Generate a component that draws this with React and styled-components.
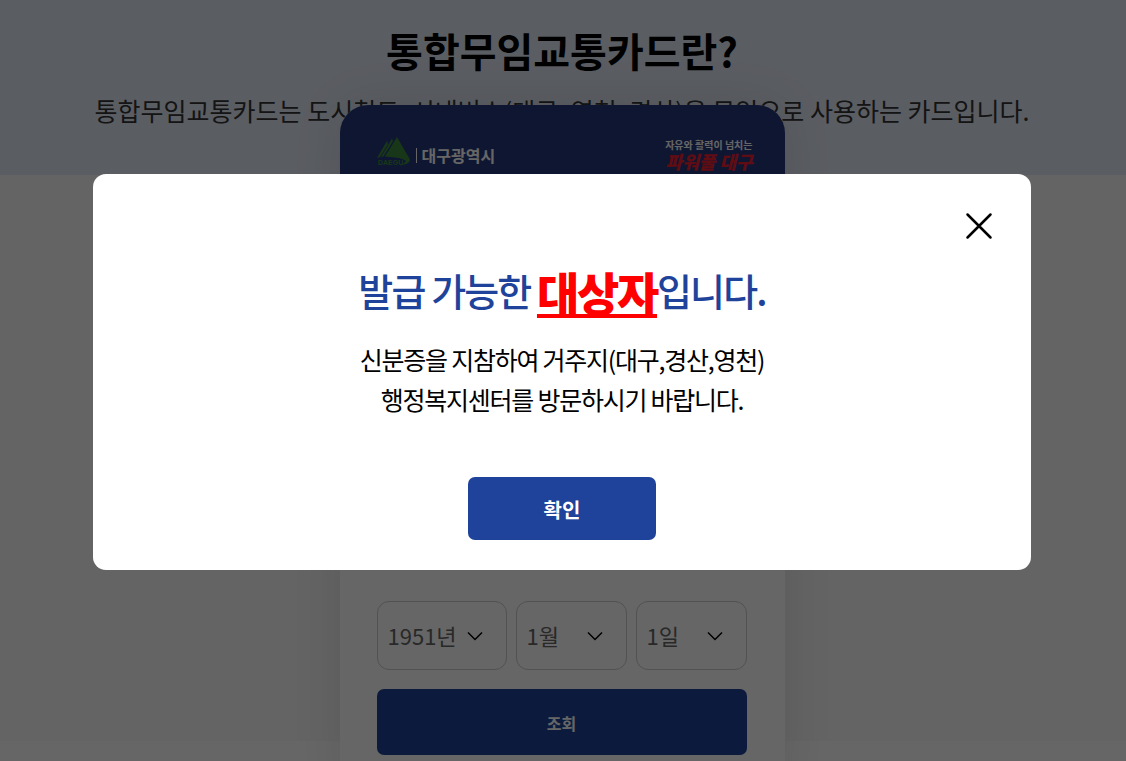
import React, { useId } from "react";
import styled, { createGlobalStyle } from "styled-components";

const GlobalStyle = createGlobalStyle`
  *, *::before, *::after { box-sizing: border-box; }
  body {
    margin: 0;
    background: #fff;
    color: #000;
    font-family: "Noto Sans CJK KR", "Noto Sans", sans-serif;
  }
  h1, h2, p { margin: 0; }
  button, select { font-family: inherit; }
`;

const Page = styled.div`
  height: 100vh;
  overflow: hidden;
`;

const Intro = styled.header`
  height: 175px;
  padding: 20px 2px 0 0;
  text-align: center;
  background: #e1e8f5;
`;

const IntroTitle = styled.h1`
  font-size: 40px;
  line-height: 60px;
  font-weight: 700;
`;

const IntroText = styled.p`
  margin-top: 11px;
  font-size: 25px;
  line-height: 38px;
  color: #333;
  white-space: nowrap;
`;

const Lookup = styled.main`
  height: 566px;
  padding-right: 2px;
  display: flex;
  justify-content: center;
  align-items: flex-start;
  background: #f9f9f9;
`;

const Card = styled.section`
  width: 445px;
  margin-top: -70px;
  flex: none;
  border-radius: 28px;
  overflow: hidden;
  background: #fff;
  box-shadow: 0 0 50px rgba(0, 0, 0, 0.1);
`;

const CardHead = styled.div`
  height: 240px;
  padding: 31px 32px 0 37px;
  display: flex;
  justify-content: space-between;
  align-items: flex-start;
  background: #25397c;
  color: #fff;
`;

const CityBrand = styled.div`
  display: flex;
  align-items: flex-end;
  gap: 6px;
  height: 30px;
`;

const CityName = styled.span`
  display: flex;
  align-items: center;
  gap: 5px;
  font-size: 16px;
  line-height: 22px;
  font-weight: 700;

  &::before {
    content: "";
    width: 1px;
    height: 15px;
    background: currentColor;
  }
`;

const Slogan = styled.div`
  text-align: right;
  white-space: nowrap;
  font-size: 10px;
  line-height: 18px;
  font-weight: 700;
`;

const SloganMark = styled.strong`
  display: block;
  font-size: 18px;
  line-height: 14px;
  font-weight: 900;
  font-style: italic;
  color: #f02030;
`;

const LookupForm = styled.form`
  padding: 256px 38px 40px 37px;
`;

const DateRow = styled.div`
  display: grid;
  grid-template-columns: 130px 111px 111px;
  gap: 9px;
`;

const SelectBox = styled.div`
  position: relative;

  select {
    width: 100%;
    height: 69px;
    padding: 0 10px 2px;
    appearance: none;
    border: 1px solid #ccc;
    border-radius: 12px;
    background: #fff;
    color: #666;
    font-size: 22px;
  }

  svg {
    position: absolute;
    right: 24px;
    top: 30px;
    pointer-events: none;
  }
`;

const BlueButton = styled.button`
  display: block;
  width: ${(p) => p.$width};
  height: ${(p) => p.$height};
  margin: ${(p) => p.$margin};
  padding: 2px 0 0;
  border: 0;
  border-radius: 7px;
  background: #1f439a;
  color: #fff;
  font-size: ${(p) => p.$size};
  font-weight: 700;
  cursor: pointer;
`;

const Dim = styled.div`
  position: fixed;
  inset: 0;
  display: flex;
  justify-content: center;
  align-items: flex-start;
  padding: 174px 95px 0 93px;
  background: rgba(0, 0, 0, 0.6);
`;

const Modal = styled.div`
  position: relative;
  width: 100%;
  padding: 82px 30px 30px;
  border-radius: 13px;
  background: #fff;
  text-align: center;
`;

const CloseButton = styled.button`
  position: absolute;
  top: 36px;
  right: 36px;
  width: 32px;
  height: 32px;
  padding: 0;
  border: 0;
  background: none;
  cursor: pointer;

  svg { display: block; }
`;

const ModalTitle = styled.h2`
  font-size: 38px;
  line-height: 68px;
  font-weight: 500;
  letter-spacing: -0.05em;
  color: #1f439a;

  em {
    font-size: 46px;
    line-height: 46px;
    vertical-align: -5px;
    font-style: normal;
    font-weight: 900;
    letter-spacing: -0.05em;
    color: #f00;
    text-decoration: underline;
    text-decoration-thickness: 4px;
    text-underline-offset: 3px;
    text-decoration-skip-ink: none;
  }
`;

const ModalText = styled.p`
  margin-top: 15px;
  font-size: 25px;
  line-height: 40px;
  letter-spacing: -0.05em;
`;

function DaeguLogo() {
  return (
    <svg width="33" height="29" viewBox="0 0 33 29" role="img" aria-label="DAEGU" fill="#3c8a3c">
      <path d="M10 4 L11 7 L3 20 L0 21 Z" />
      <path d="M15 1.5 L16 4 L6.5 19.5 L4 20 Z" />
      <path d="M20 0 L30 17.5 Q32 20 33 23 Q32.500 27 23 28.500 Q29.500 25.500 28.500 23.500 Q25 20.500 8 19.500 Z" />
      <text x="1" y="28" fontSize="7" fontWeight="700" fontFamily="Liberation Sans, sans-serif">DAEGU</text>
    </svg>
  );
}

function DateSelect({ label, value }) {
  const id = useId();
  return (
    <SelectBox>
      <select id={id} aria-label={label} defaultValue={value}>
        <option value={value}>{value}</option>
      </select>
      <svg width="16" height="10" viewBox="0 0 16 10" fill="none" stroke="#000" strokeWidth="1.5" aria-hidden="true">
        <path d="M1 1.500 L8 8.500 L15 1.500" />
      </svg>
    </SelectBox>
  );
}

export default function App() {
  return (
    <Page>
      <GlobalStyle />
      <Intro>
        <IntroTitle>통합무임교통카드란?</IntroTitle>
        <IntroText>
          통합무임교통카드는 도시철도, 시내버스(대구, 영천, 경산)을 무임으로 사용하는 카드입니다.
        </IntroText>
      </Intro>
      <Lookup>
        <Card>
          <CardHead>
            <CityBrand>
              <DaeguLogo />
              <CityName>대구광역시</CityName>
            </CityBrand>
            <Slogan>
              자유와 활력이 넘치는
              <SloganMark>파워풀 대구</SloganMark>
            </Slogan>
          </CardHead>
          <LookupForm onSubmit={(e) => e.preventDefault()}>
            <DateRow>
              <DateSelect label="년" value="1951년" />
              <DateSelect label="월" value="1월" />
              <DateSelect label="일" value="1일" />
            </DateRow>
            <BlueButton type="submit" $width="100%" $height="66px" $margin="19px 0 0" $size="16px">
              조회
            </BlueButton>
          </LookupForm>
        </Card>
      </Lookup>
      <Dim>
        <Modal role="dialog" aria-modal="true" aria-labelledby="result-title">
          <CloseButton type="button" aria-label="닫기">
            <svg width="32" height="32" viewBox="0 0 32 32" fill="none" stroke="#000" strokeWidth="2.5" strokeLinecap="round">
              <path d="M4.500 4.500 L27.500 27.500 M27.500 4.500 L4.500 27.500" />
            </svg>
          </CloseButton>
          <ModalTitle id="result-title">
            발급 가능한 <em>대상자</em>입니다.
          </ModalTitle>
          <ModalText>
            신분증을 지참하여 거주지(대구,경산,영천)
            <br />
            행정복지센터를 방문하시기 바랍니다.
          </ModalText>
          <BlueButton type="button" $width="188px" $height="63px" $margin="58px auto 0" $size="20px">
            확인
          </BlueButton>
        </Modal>
      </Dim>
    </Page>
  );
}
